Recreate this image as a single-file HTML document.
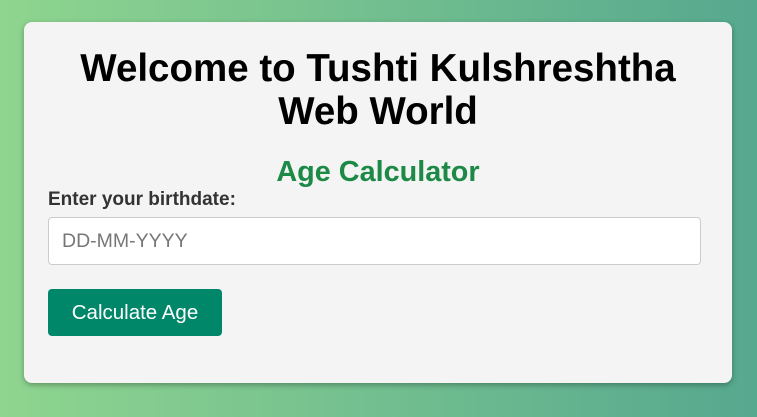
<!DOCTYPE html>
<html><head><style>
html,body{margin:0;padding:0;}
body{width:757px;height:417px;background:linear-gradient(to right,#8fd58f,#56a88f);font-family:"Liberation Sans",Arial,sans-serif;position:relative;overflow:hidden;}
.card{position:absolute;left:24px;top:22px;width:708px;height:361px;background:#f4f4f4;border-radius:8px;box-shadow:0 2px 6px rgba(0,0,0,.3);}
h1{margin:0;position:absolute;top:25px;left:0;width:100%;text-align:center;font-size:38.5px;line-height:43px;font-weight:bold;color:#000;}
h2{margin:0;position:absolute;top:133px;left:0;width:100%;text-align:center;font-size:28.8px;line-height:34px;font-weight:bold;color:#1c8a46;}
label{position:absolute;left:24px;top:167px;font-size:19px;line-height:22px;font-weight:bold;color:#333;}
.in{position:absolute;left:24px;top:195px;width:653px;height:48px;border:1px solid #ccc;border-radius:4px;background:#fff;box-sizing:border-box;padding-left:13px;line-height:46px;font-size:19.5px;color:#777;}
.btn{position:absolute;left:24px;top:267px;width:174px;height:47px;background:#00876a;color:#fff;border-radius:4px;font-size:20.5px;text-align:center;line-height:47px;}
</style></head><body>
<div class="card">
<h1>Welcome to Tushti Kulshreshtha<br>Web World</h1>
<h2>Age Calculator</h2>
<label>Enter your birthdate:</label>
<div class="in">DD-MM-YYYY</div>
<div class="btn">Calculate Age</div>
</div>
</body></html>
